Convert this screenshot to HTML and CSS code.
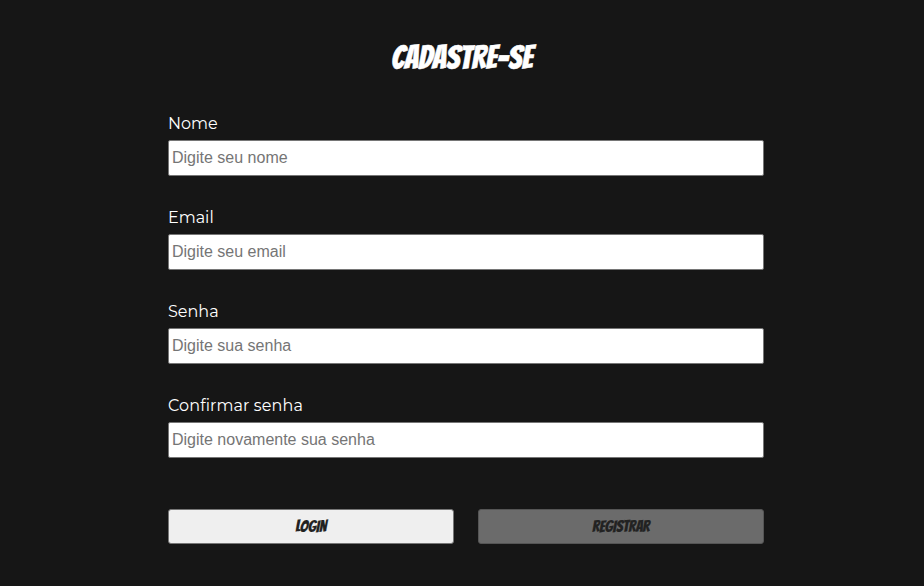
FILE: index.html
```html
<!DOCTYPE html>
<html lang="pt-BR">
<head>
<meta charset="utf-8">
<title>Cadastre-se</title>
<link rel="stylesheet" href="styles.css">
</head>
<body>
<main class="signup">
  <h1 class="title">CADASTRE-SE</h1>
  <form class="form">
    <div class="field"><label class="label" for="nome">Nome</label><input class="input" id="nome" type="text" placeholder="Digite seu nome"></div>
    <div class="field"><label class="label" for="email">Email</label><input class="input" id="email" type="email" placeholder="Digite seu email"></div>
    <div class="field"><label class="label" for="senha">Senha</label><input class="input" id="senha" type="password" placeholder="Digite sua senha"></div>
    <div class="field"><label class="label label-wide" for="confirmar">Confirmar senha</label><input class="input" id="confirmar" type="password" placeholder="Digite novamente sua senha"></div>
    <div class="actions">
      <button class="button" type="button">LOGIN</button>
      <button class="button button-disabled" type="submit" disabled>REGISTRAR</button>
    </div>
  </form>
</main>
</body>
</html>
```
FILE: styles.css
```css
* { box-sizing: border-box; }
body { margin: 0; background: #161616; color: #fff; }
.signup { width: 596px; margin-left: 168px; padding-top: 39px; }
.title { margin: 0 0 35px; padding-right: 8px; height: 38px; text-align: center; font: 400 32px/38px "Bangers", "Roboto", sans-serif; letter-spacing: .1px; -webkit-text-stroke: .5px #fff; }
.form { display: flex; flex-direction: column; gap: 30px; }
.field { display: flex; flex-direction: column; height: 64px; }
.label { height: 28px; font: 400 16px/24px "Montserrat", "Inter", sans-serif; font-variant-ligatures: none; }
.label-wide { letter-spacing: .1px; }
.input { height: 36px; width: 100%; padding: 1px 3px; border: 1px solid #767676; border-radius: 2px; background: #fff; font: 16px "Liberation Sans", Arial, sans-serif; outline: 0; }
.input::placeholder { color: #757575; }
.actions { display: grid; grid-template-columns: 286px 286px; gap: 24px; padding-top: 21px; }
.button { height: 35px; padding: 0; border: 1px solid #767676; border-radius: 3px; background: #efefef; color: #212121; font: 400 16px/33px "Bangers", "Roboto", sans-serif; -webkit-text-stroke: .2px currentColor; }
.button-disabled { background: #6b6b6b; border-color: #555; color: #222; }
```
